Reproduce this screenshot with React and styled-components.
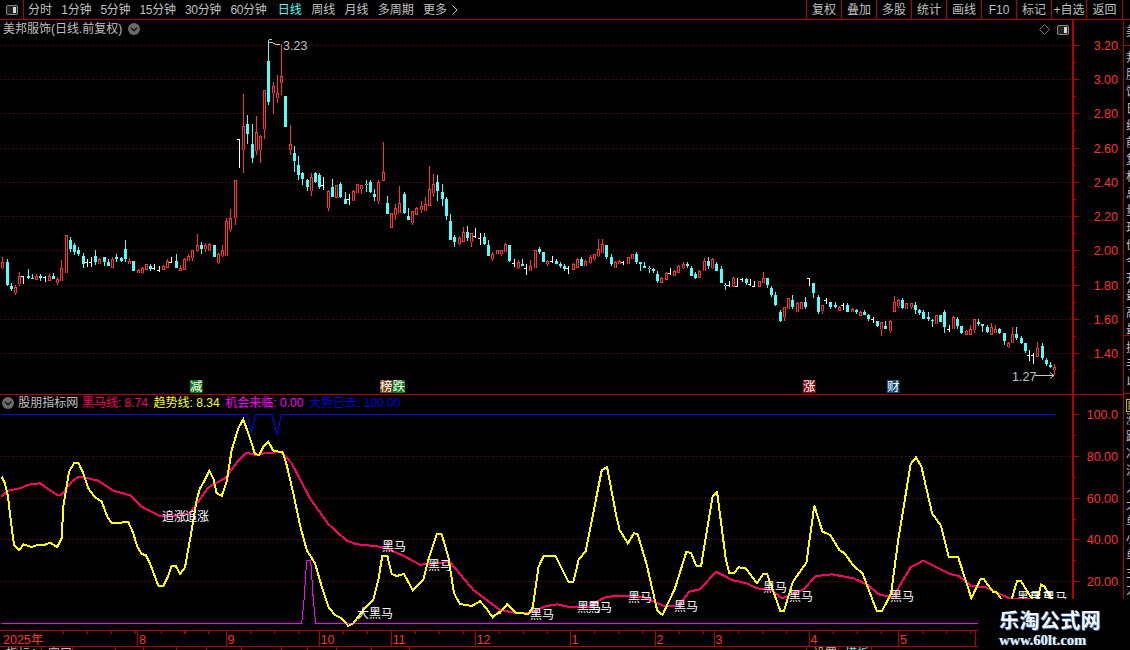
import React from "react";
import styled, { createGlobalStyle } from "styled-components";

const FONT = `"Liberation Sans", "Noto Sans CJK SC", sans-serif`;
const RED = "#b40000";
const AXIS_TEXT = "#ff3232";
const CANDLE_RED = "#ff3232";
const CANDLE_CYAN = "#54fcfc";
const GRID = "#8a0000";
const GREY = "#c0c0c0";

const Global = createGlobalStyle`
  html, body { margin: 0; padding: 0; background: #000; }
  #root { width: 1130px; height: 650px; }
`;

const Page = styled.div`
  position: relative;
  width: 1130px;
  height: 650px;
  overflow: hidden;
  display: flex;
  flex-direction: column;
  background: #000;
  color: ${GREY};
  font: 12px/1 ${FONT};
`;

const Toolbar = styled.header`
  height: 19px;
  flex: none;
  display: flex;
  align-items: stretch;
  border-bottom: 1px solid ${RED};
`;
const ToggleCell = styled.div`
  width: 23px;
  display: flex;
  align-items: center;
  justify-content: center;
  border-right: 1px solid ${RED};
`;
const PeriodRow = styled.nav`
  display: flex;
  align-items: center;
  gap: 9.3px;
  margin-left: 4px;
`;
const Period = styled.span`
  color: ${(p) => (p.$active ? "#54fcfc" : GREY)};
  margin-left: ${(p) => (p.$active ? 2 : 0)}px;
  letter-spacing: ${(p) => (p.$tight ? -0.3 : 0)}px;
  white-space: nowrap;
`;
const MoreRow = styled.span`
  display: flex;
  align-items: center;
  gap: 5px;
`;
const ToolButtons = styled.div`
  margin-left: auto;
  margin-right: 7px;
  display: flex;
`;
const ToolButton = styled.div`
  width: ${(p) => p.$w || 35}px;
  box-sizing: border-box;
  border-left: 1px solid ${RED};
  border-right: ${(p) => (p.$last ? `1px solid ${RED}` : "0")};
  display: flex;
  align-items: center;
  justify-content: center;
  white-space: nowrap;
`;

const Workspace = styled.main`
  flex: 1;
  min-height: 0;
  display: flex;
`;
const ChartColumn = styled.div`
  width: 1123px;
  display: flex;
  flex-direction: column;
`;
const Pane = styled.section`
  height: ${(p) => p.$h}px;
  flex: none;
  display: flex;
  box-sizing: content-box;
  border-bottom: ${(p) => (p.$line ? `1px solid ${RED}` : "0")};
`;
const Plot = styled.div`
  position: relative;
  width: 1072px;
  flex: none;
`;
const ChartSvg = styled.svg`
  display: block;
  font-family: ${FONT};
`;
const AxisSvg = styled.svg`
  display: block;
  flex: 1;
  font-family: ${FONT};
`;
const PaneHeader = styled.div`
  position: absolute;
  left: ${(p) => p.$left}px;
  top: ${(p) => p.$top}px;
  display: flex;
  align-items: center;
  gap: ${(p) => p.$gap}px;
  white-space: nowrap;
`;
const IndicatorTitle = styled.span`
  margin: 0 -2px 0 -1.5px;
`;
const Legend = styled.span`
  color: ${(p) => p.$color};
`;
const PaneTools = styled.div`
  position: absolute;
  right: 3px;
  top: 4px;
  display: flex;
  align-items: center;
  gap: 7px;
`;

const TimeAxis = styled.div`
  height: 15px;
  flex: none;
  display: flex;
  border-top: 1px solid ${RED};
  border-bottom: 1px solid ${RED};
`;
const MonthCell = styled.div`
  width: ${(p) => p.$w}px;
  flex: none;
  box-sizing: border-box;
  border-left: ${(p) => (p.$first ? "0" : `1px solid ${RED}`)};
  padding: 3px 0 0 ${(p) => (p.$first ? 3 : 1)}px;
  color: ${AXIS_TEXT};
  font-size: 12.5px;
  background-image: repeating-linear-gradient(90deg, transparent 0 23px, ${RED} 23px 24px);
  background-repeat: no-repeat;
  background-size: calc(100% - ${(p) => p.$skip || 0}px) 3px;
  background-position: right top;
`;
const BottomStrip = styled.div`
  flex: 1;
  display: flex;
  overflow: hidden;
`;
const StripCell = styled.div`
  width: ${(p) => p.$w}px;
  flex: none;
  box-sizing: border-box;
  border-right: 1px solid ${RED};
  padding: 1px 0 0 6px;
  color: ${(p) => p.$color || GREY};
  white-space: nowrap;
  overflow: hidden;
`;

const SideRail = styled.aside`
  flex: 1;
  display: flex;
  flex-direction: column;
  overflow: hidden;
  border-left: 1px solid ${RED};
`;
const RailRow = styled.div`
  height: ${(p) => p.$h}px;
  flex: none;
  box-sizing: border-box;
  border-bottom: 1px solid ${RED};
  padding: 4px 0 0 2px;
  overflow: hidden;
  line-height: 17px;
  color: ${GREY};
  width: 7px;
`;
const RailChars = styled.div`
  width: 12px;
  word-break: break-all;
`;
const RailBadge = styled.div`
  width: 12px;
  height: 13px;
  margin-top: 1px;
  box-sizing: border-box;
  border: 1px solid #c8b400;
  color: #e6d000;
  font-size: 10px;
  line-height: 11px;
`;

const Watermark = styled.div`
  position: absolute;
  left: 978px;
  top: 599px;
  width: 152px;
  height: 51px;
  background: #000;
  display: flex;
  flex-direction: column;
  align-items: flex-start;
  padding: 10px 0 0 21px;
  box-sizing: border-box;
`;
const WatermarkTitle = styled.div`
  font: 700 20px/22px "Noto Sans CJK SC", sans-serif;
  letter-spacing: 0.4px;
  color: #f2f6ff;
  text-shadow: 1px 1px 0 #3c6ea8;
  white-space: nowrap;
`;
const WatermarkUrl = styled.div`
  margin-top: 1px;
  font: 700 14.5px/16px "Liberation Serif", serif;
  color: #eaf2ff;
  text-shadow: 1px 0 0 #3c6ea8;
  white-space: nowrap;
`;

/* ---------- data ---------- */
const parse = (oy, s) =>
  s.trim().split(/\s+/).map((r) => {
    const t = r[0];
    const [h, a, b, l] = r.slice(1).split(",").map(Number);
    return [t, oy + h / 3, oy + a / 3, oy + b / 3, oy + l / 3];
  });

const candles = [
  ...parse(220, `R112,126,140,147 C118,125,195,198 C190,198,207,212 R195,200,215,225 R156,168,190,197 W168,168,190,190
  C148,168,175,178 C162,175,177,177 R162,168,177,178 C162,168,175,183 W168,172,172,183 R162,168,180,180 C158,168,177,177
  R170,177,186,196 R120,145,180,183 R45,45,155,158 C52,60,87,96 C70,75,97,105 C82,90,103,108 C100,108,133,144 W118,125,125,137
  W110,125,125,137 C90,108,127,134 R113,117,130,132 C111,111,125,137 C118,126,138,138 R112,116,140,141 C102,112,118,125
  C110,115,123,126 C60,87,118,126 R114,124,129,133 C123,123,153,153 R148,149,157,160 R140,144,156,162 R133,133,146,148
  C132,139,146,152 W133,145,145,147 W138,150,150,153 R136,139,147,148 R118,123,140,142 W110,125,125,125 C102,123,144,144
  R136,145,150,150 R115,117,147,147 R103,108,121,124 R90,91,110,123 R42,76,90,95 C67,75,88,102 R70,75,85,95 R70,72,90,93
  C75,75,110,110 R100,102,125,132 R76,91,105,110`),
  ...parse(30, `R563,573,675,677 R537,565,597,605 R450,450,560,585 W327,328,410,410 R192,288,357,428 C255,282,312,342
  C282,342,385,398 R258,307,360,375 R315,318,357,398 R180,180,293,327 C30,93,215,225 R155,168,185,252 R135,190,200,218
  R42,138,155,195 C198,198,290,290 R285,343,356,375 C348,369,393,425 C378,405,435,450 C425,429,447,465 C447,450,471,483
  R430,442,480,497 C427,429,456,460 C430,435,471,476 W441,465,465,476 R480,484,530,543 C447,471,500,500 R465,466,500,500
  C457,462,500,505 C487,507,521,521 W492,507,507,521 R480,484,510,512 R462,463,486,490 R465,466,473,492 C450,463,463,485
  C450,456,486,490 C477,492,501,513 R450,457,510,522 R336,427,449,449 C498,519,552,552 R548,550,590,590 R522,534,553,570
  R468,519,546,550 C487,492,548,551 C534,558,570,570 R543,544,575,585 R532,534,551,552 R512,528,536,549 R500,522,540,543
  R408,478,524,524 R432,462,485,500 C435,456,483,513`),
  ...parse(170, `C42,66,87,108 C82,87,138,150 C132,153,210,210 C195,201,216,231 R198,204,219,225 R171,186,213,213 C168,186,204,213
  R190,190,213,231 W174,198,198,201 W189,204,204,222 C190,201,222,225 C210,225,258,258 R246,252,264,273 R240,240,249,252
  R240,240,249,258 R219,222,243,246 C225,225,273,276 W267,279,279,288 R270,276,291,297 C267,282,288,288 W282,294,294,312
  R270,288,300,303 R240,240,291,294 C231,237,246,252 C246,246,276,276 R270,273,279,288 W258,273,273,276 C267,273,282,282
  C276,282,288,294 C282,288,297,303 W288,294,294,309 R279,282,297,297 R264,267,291,291 C261,267,288,288 R270,273,285,288
  R255,262,276,282 R252,252,264,273 R207,237,255,261 R207,222,246,249 C225,225,261,267 C252,261,282,288 R273,276,291,294
  R270,273,279,282 W273,276,276,282 R261,261,279,282 R252,252,264,267 C246,252,276,282 C276,276,282,303 C276,288,294,294
  C288,294,294,309 C294,297,303,309 C303,312,333,339 R321,324,336,336 R306,309,327,327 W294,309,309,312 R300,303,315,318
  R285,288,306,306 R276,282,291,297 C276,282,288,294 C288,294,318,318 C306,312,324,327 R300,303,321,321 R264,273,300,303
  C261,273,288,297 R264,267,291,297 C276,282,303,303 C288,297,339,339 C339,345,345,360 W333,345,345,348 R321,324,348,348
  W324,348,348,348 W324,327,327,333 C324,327,339,345 W327,342,342,345 W333,348,348,348 R333,333,348,348 R306,324,336,339
  C324,324,345,354`),
  ...parse(260, `C78,84,105,111 C96,105,135,138 C150,156,183,186 R141,141,168,183 R114,114,144,147 C105,120,141,147 R126,129,153,156
  R126,126,144,147 C111,126,141,147 W54,54,75,75 C69,69,99,114 C105,111,156,162 R135,135,150,162 W114,120,120,129 C126,126,141,147
  C126,135,141,144 R138,141,150,150 W129,135,135,147 C129,135,156,156 R144,147,153,156 C147,150,156,162 R153,156,165,165
  C150,156,165,165 C162,165,177,183 W171,177,177,186 C183,183,198,201 R186,186,204,228 C183,198,207,207 R180,183,210,219
  R108,126,153,153 R117,120,135,144 C114,120,144,147 R129,129,144,147 R129,129,138,147 C126,135,150,162 C147,150,159,165
  C150,156,177,177 C156,171,177,183 C177,180,183,201 R165,165,189,192 C165,165,186,186 C150,156,201,219 W195,207,207,213
  R168,171,204,207 C171,177,198,207 C198,198,219,222 R210,213,222,222 R195,207,222,222 R177,177,207,219 C177,186,192,198
  C192,192,198,216 C195,201,216,219 R189,201,222,222 R195,207,216,219 C204,207,219,222 C219,219,243,255 R246,249,258,264
  R201,222,246,249 C201,222,234,240 C228,234,249,252 C249,249,273,279 W270,285,285,300 W279,285,285,309 R246,264,288,288
  C249,258,294,300 C294,300,312,318 C306,315,321,324 R312,321,327,345`),
];

const z11 = (a) => {
  const o = [];
  for (let i = 0; i < a.length; i += 2) o.push(`${(a[i] / 3).toFixed(1)},${(410 + a[i + 1] / 3).toFixed(1)}`);
  return o;
};
const z12 = (a) => {
  const o = [];
  for (let i = 0; i < a.length; i += 2) o.push(`${(500 + a[i] / 2.8).toFixed(1)},${(450 + a[i + 1] / 3).toFixed(1)}`);
  return o;
};

const yellow = [
  ...z11([5,200,15,220,24,260,32,330,42,405,58,420,70,403,95,411,115,404,135,404,150,398,172,411,185,385,190,290,207,185,222,160,235,158,250,190,265,235,285,262,305,275,322,320,335,340,385,336,400,370,412,410,425,432,438,436,450,460,475,527,490,527,502,505,515,467,527,467,540,492,555,472,575,360,590,270,600,235,612,215,628,182,640,205,650,250,665,258,680,215,695,120,715,55,730,28,745,70,765,132,778,135,790,110,805,95,820,122,848,127,860,165,880,250,900,345,920,420,945,460,965,530,985,590,1005,615,1025,625,1045,648,1060,640,1090,600,1120,570,1135,510,1147,437,1162,437,1175,492,1190,498,1212,492,1238,540,1270,510,1285,450,1310,373,1325,373,1345,440,1362,550,1380,582,1415,588,1440,574,1455,590,1478,622,1497,606]),
  ...z12([0,488,20,463,45,488,80,492,92,470,108,350,122,318,155,318,192,397,205,397,220,330,240,303,285,60,300,52,325,195,335,240,358,280,375,250,385,252,410,340,440,480,455,495,490,415,522,305,535,310,550,348,563,348,595,140,608,127,632,325,642,370,655,370,668,352,688,355,720,400,737,372,748,372,785,483,795,483,820,395,858,338,880,167,903,245,925,255,950,300,965,310,990,348,1015,370,1055,483,1070,483,1095,430,1115,270,1150,42,1165,22,1180,50,1210,190,1235,228,1257,322,1283,322,1320,445,1345,388,1355,388,1380,425,1390,425,1403,447,1418,480,1433,447,1448,392,1458,392,1490,447,1500,470,1515,404,1525,410,1545,447,1552,470]),
].join(" ");

const pink = [
  ...z11([5,260,20,243,60,235,85,224,120,220,170,254,185,254,215,215,235,200,260,204,295,212,340,242,390,256,425,290,480,318,530,318,570,310,625,232,675,205,710,158,740,128,770,135,800,128,845,127,875,160,930,265,985,342,1040,392,1070,403,1150,411,1210,437,1260,464,1350,456,1420,540,1497,598]),
  ...z12([0,480,50,490,80,490,130,468,160,463,190,470,250,470,290,443,320,438,400,440,460,468,500,468,530,425,560,418,605,365,650,390,690,400,720,415,760,420,790,445,850,418,885,378,930,373,990,385,1030,405,1060,433,1100,442,1150,352,1185,332,1260,372,1285,378,1320,408,1360,412,1430,447,1480,447,1560,460]),
].join(" ");

const blue = "2,414 247,414 251.5,433 255.5,414 272,414 277,435 281.5,414 1055,414";
const magenta = z11([5,640,905,640,912,570,920,450,932,450,940,570,947,640,3165,640]).join(" ");

const priceTicks = [3.2, 3.0, 2.8, 2.6, 2.4, 2.2, 2.0, 1.8, 1.6, 1.4];
const priceY = (p) => Math.round(45 + (3.2 - p) * 171.1);
const indTicks = [[100, "100.0"], [80, "80.00"], [60, "60.00"], [40, "40.00"], [20, "20.00"]];
const indY = (v) => Math.round(414 + (100 - v) * 2.09);

const signals = [
  { x: 190, parts: [["减", "#0a7a14"]] },
  { x: 380, parts: [["榜", "#7a4210"], ["跌", "#0a7a14"]] },
  { x: 803, parts: [["涨", "#8a0d0d"]] },
  { x: 887, parts: [["财", "#0f4a78"]] },
];

const marks = [
  ["追涨", 162, 516], ["追涨", 185, 516], ["黑马", 382, 546], ["黑马", 428, 565], ["大黑马", 357, 613],
  ["黑马", 530, 614], ["黑马", 577, 607], ["黑马", 588, 607], ["黑马", 628, 597], ["黑马", 674, 606],
  ["黑马", 763, 587], ["黑马", 789, 596], ["黑马", 890, 596], ["黑马", 1017, 597], ["黑马", 1030, 597], ["黑马", 1043, 597],
];

const months = [
  { t: "2025年", w: 137, skip: 40, first: true }, { t: "8", w: 88.5 }, { t: "9", w: 93 }, { t: "10", w: 72 },
  { t: "11", w: 84 }, { t: "12", w: 95 }, { t: "1", w: 85 }, { t: "2", w: 59 }, { t: "3", w: 95 },
  { t: "4", w: 89.5 }, { t: "5", w: 77 }, { t: "6", w: 148 },
];

const strip = [
  [42, "指标A"], [31, "窗口"], [43, ""], [28, ""], [33, ""], [30, ""], [35, ""], [40, ""], [26, ""], [29, ""],
  [35, ""], [38, ""], [397, ""], [32, "设置"], [33, "模板", "#54fcfc"], [128, ""],
];

const periods = ["分时", "1分钟", "5分钟", "15分钟", "30分钟", "60分钟", "日线", "周线", "月线", "多周期"];
const tools = ["复权", "叠加", "多股", "统计", "画线", "F10", "标记", "+自选"];

/* ---------- drawings ---------- */
const Toggle = ({ w = 12, h = 10 }) => (
  <svg width={w} height={h} viewBox="0 0 12 10" style={{ display: "block" }}>
    <rect x="0.5" y="0.5" width="11" height="9" rx="1.5" fill="#222" stroke="#8a8a8a" />
    <rect x="7" y="2" width="3" height="6" fill="#d8d8d8" />
  </svg>
);
const Diamond = () => (
  <svg width="11" height="11" viewBox="0 0 11 11" style={{ display: "block" }}>
    <path d="M5.5 .5 L10.5 5.5 L5.5 10.5 L.5 5.5 Z" fill="none" stroke="#7a7a7a" />
  </svg>
);
const DownBadge = () => (
  <svg width="12" height="12" viewBox="0 0 12 12" style={{ display: "block" }}>
    <circle cx="6" cy="6" r="6" fill="#6a6a6a" />
    <path d="M3 4.8 L6 7.8 L9 4.8" fill="none" stroke="#161616" strokeWidth="1.5" />
  </svg>
);
const MoreChevron = () => (
  <svg width="6" height="10" viewBox="0 0 6 10" style={{ display: "block" }}>
    <path d="M.5 .5 L5 5 L.5 9.5" fill="none" stroke={GREY} />
  </svg>
);

const box = (x1, y1, x2, y2) => `M${x1} ${y1}H${x2}V${y2}H${x1}Z`;

const candlePaths = () => {
  let red = "", cyan = "", white = "";
  candles.forEach(([t, h, a, b, l], i) => {
    const x = Math.round(2.3 + 4.225 * i);
    const [H, A, B, L] = [h, a, b, l].map(Math.round);
    if (t === "W") {
      white += box(x, H, x + 1, L + 1) + box(x - 2, A, x, A + 1);
      return;
    }
    const wicks = (H < A ? box(x, H, x + 1, A) : "") + (L > B ? box(x, B, x + 1, L) : "");
    if (t === "R") {
      red += wicks + box(x - 1, A, x + 2, B + 1);
      if (B - A > 1) red += box(x, A + 1, x + 1, B);
    } else {
      cyan += wicks + box(x - 1, A, x + 2, Math.max(B, A + 1));
    }
  });
  return { red, cyan, white };
};
const P = candlePaths();

const HGrid = ({ ys }) =>
  ys.map((y) => (
    <line key={y} x1="1" x2="1072" y1={y + 0.5} y2={y + 0.5} stroke={GRID} strokeDasharray="1 3" shapeRendering="crispEdges" />
  ));

const PriceChart = () => (
  <ChartSvg width="1072" height="374" viewBox="0 20 1072 374">
    <HGrid ys={priceTicks.map(priceY)} />
    <g shapeRendering="crispEdges" fillRule="evenodd">
      <path d={P.red} fill={CANDLE_RED} />
      <path d={P.cyan} fill={CANDLE_CYAN} />
      <path d={P.white} fill="#fff" />
    </g>
    <path d="M268.5 39H272M268.5 42H271L276 44.5H280" fill="none" stroke="#c8c8c8" shapeRendering="crispEdges" />
    <text x="283" y="50" fill={GREY} fontSize="12.5">3.23</text>
    <text x="1012" y="381" fill={GREY} fontSize="12.5">1.27</text>
    <path d="M1035 375.5H1054M1050 372.5L1054 375.5L1050 378.5" fill="none" stroke="#c8c8c8" />
    {signals.map((s) => (
      <g key={s.x}>
        {s.parts.map(([t, c], i) => (
          <g key={t}>
            <rect x={s.x + i * 12.5} y="380" width="12.5" height="13" fill={c} />
            <text x={s.x + i * 12.5} y="391" fontSize="12.5" fill="#fff">{t}</text>
          </g>
        ))}
      </g>
    ))}
  </ChartSvg>
);

const IndicatorChart = () => (
  <ChartSvg width="1072" height="235" viewBox="0 395 1072 235">
    <HGrid ys={[80, 60, 40, 20].map(indY)} />
    <g fill="none" shapeRendering="crispEdges">
      <polyline points={blue} stroke="#0000ff" />
      <polyline points={magenta} stroke="#ff00ff" />
      <polyline points={pink} stroke="#ff0066" strokeWidth="2" />
      <polyline points={yellow} stroke="#ffff00" strokeWidth="2" />
    </g>
    {marks.map(([t, x, y]) => (
      <text key={`${x}-${y}`} x={x} y={y + 5} fontSize="12" fill="#fff">{t}</text>
    ))}
  </ChartSvg>
);

const AxisTicks = ({ major, step, top, height, labels }) => {
  const rows = [];
  major.forEach((y) => {
    rows.push(`M1072 ${y + 0.5}H1079`);
    rows.push(`M1072 ${y + step + 0.5}H1076`);
  });
  return (
    <AxisSvg height={height} viewBox={`1072 ${top} 51 ${height}`}>
      <rect x="1072" y={top} width="2" height={height} fill={RED} />
      <path d={rows.join("")} stroke={RED} shapeRendering="crispEdges" />
      {labels.map(([y, t]) => (
        <text key={t} x="1118" y={y + 5} textAnchor="end" fontSize="12.5" fill={AXIS_TEXT}>{t}</text>
      ))}
    </AxisSvg>
  );
};

export default function App() {
  return (
    <>
      <Global />
      <Page>
        <Toolbar>
          <ToggleCell><Toggle /></ToggleCell>
          <PeriodRow>
            {periods.map((p) => (
              <Period key={p} $active={p === "日线"} $tight={/\d/.test(p)}>{p}</Period>
            ))}
            <MoreRow><Period>更多</Period><MoreChevron /></MoreRow>
          </PeriodRow>
          <ToolButtons>
            {tools.map((t) => <ToolButton key={t}>{t}</ToolButton>)}
            <ToolButton $w={37} $last>返回</ToolButton>
          </ToolButtons>
        </Toolbar>
        <Workspace>
          <ChartColumn>
            <Pane $h={374} $line>
              <Plot>
                <PriceChart />
                <PaneHeader $left={3} $top={3} $gap={6}>
                  <span>美邦服饰(日线.前复权)</span>
                  <DownBadge />
                </PaneHeader>
                <PaneTools>
                  <Diamond />
                  <Toggle />
                </PaneTools>
              </Plot>
              <AxisTicks
                top={20}
                height={374}
                step={17}
                major={priceTicks.map(priceY)}
                labels={priceTicks.map((p) => [priceY(p), p.toFixed(2)])}
              />
            </Pane>
            <Pane $h={235}>
              <Plot>
                <IndicatorChart />
                <PaneHeader $left={2} $top={2} $gap={5.7}>
                  <DownBadge />
                  <IndicatorTitle>股朋指标网</IndicatorTitle>
                  <Legend $color="#ff0066">黑马线: 8.74</Legend>
                  <Legend $color="#ffff00">趋势线: 8.34</Legend>
                  <Legend $color="#ff00ff">机会来临: 0.00</Legend>
                  <Legend $color="#0000e0">大势已去: 100.00</Legend>
                </PaneHeader>
              </Plot>
              <AxisTicks
                top={395}
                height={235}
                step={21}
                major={indTicks.map(([v]) => indY(v))}
                labels={indTicks.map(([v, t]) => [indY(v), t])}
              />
            </Pane>
            <TimeAxis>
              {months.map((m) => (
                <MonthCell key={m.t} $w={m.w} $first={m.first} $skip={m.skip}>{m.t}</MonthCell>
              ))}
            </TimeAxis>
            <BottomStrip>
              {strip.map(([w, t, c], i) => (
                <StripCell key={i} $w={w} $color={c}>{t}</StripCell>
              ))}
            </BottomStrip>
          </ChartColumn>
          <SideRail>
            <RailRow $h={26}><RailChars>美</RailChars></RailRow>
            <RailRow $h={290}><RailChars>邦服饰日线前复权总量现价今开最高最低</RailChars></RailRow>
            <RailRow $h={58}><RailChars>换手以</RailChars></RailRow>
            <RailRow $h={235}>
              <RailBadge>目</RailBadge>
              <RailChars>涨跌净流入大单小单主力</RailChars>
            </RailRow>
          </SideRail>
        </Workspace>
        <Watermark>
          <WatermarkTitle>乐淘公式网</WatermarkTitle>
          <WatermarkUrl>www.60lt.com</WatermarkUrl>
        </Watermark>
      </Page>
    </>
  );
}
